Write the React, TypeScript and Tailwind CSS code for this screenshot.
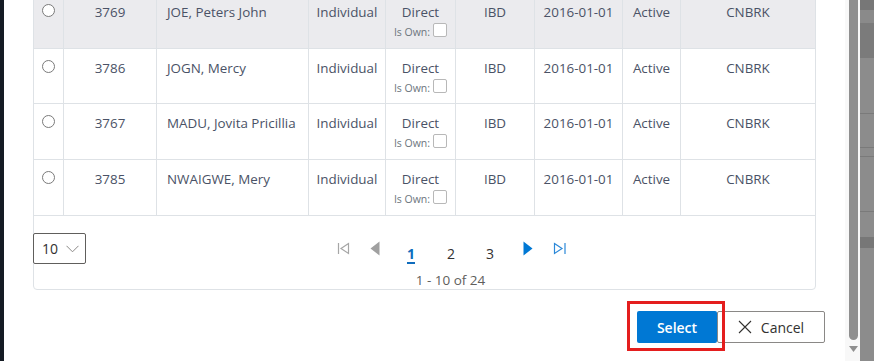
import React from "react";

type Row = { id: string; name: string; h: string; shade?: boolean };

const rows: Row[] = [
  { id: "3769", name: "JOE, Peters John", h: "h-[56px]", shade: true },
  { id: "3786", name: "JOGN, Mercy", h: "h-[55px]" },
  { id: "3767", name: "MADU, Jovita Pricillia", h: "h-[56px]" },
  { id: "3785", name: "NWAIGWE, Mery", h: "h-[56px]" },
];

const cell = "border-r border-[#dee2e6] pt-[9px] leading-[20px]";

const TableRow = ({ r }: { r: Row }) => (
  <div
    className={`grid grid-cols-[30px_93px_152px_77px_70px_79px_88px_58px_134px] border-b border-[#dee2e6] ${r.h} ${
      r.shade ? "bg-[#ebebee]" : "bg-white"
    }`}
  >
    <div className={`${cell} flex justify-center pt-[11px]`}>
      <span className="w-[13px] h-[13px] rounded-full border border-[#7a7a7a] bg-white" />
    </div>
    <div className={`${cell} text-center`}>{r.id}</div>
    <div className={`${cell} pl-[10px]`}>{r.name}</div>
    <div className={`${cell} text-center`}>Individual</div>
    <div className={`${cell} flex flex-col items-center`}>
      <span>Direct</span>
      <span className="flex items-center gap-[3px] text-[10.5px] leading-[14px] text-[#6c757d] mt-[3px]">
        Is Own:
        <span className="w-[14px] h-[14px] rounded-[2px] border border-[#b8b8b8] bg-white -mt-[4px]" />
      </span>
    </div>
    <div className={`${cell} text-center`}>IBD</div>
    <div className={`${cell} text-center`}>2016-01-01</div>
    <div className={`${cell} text-center`}>Active</div>
    <div className="pt-[9px] leading-[20px] text-center">CNBRK</div>
  </div>
);

const Pager = () => (
  <div className="flex flex-col items-center">
    <div className="flex items-center h-[31px] text-[14px]">
      <span className="w-[32px] flex justify-center">
        <svg width="13" height="13" viewBox="0 0 13 13" fill="none" stroke="#a6a6a6" strokeWidth="1.2">
          <path d="M1.5 1v11" />
          <path d="M11.5 1.5 L4 6.5 L11.5 11.5 Z" />
        </svg>
      </span>
      <span className="w-[32px] flex justify-center">
        <svg width="10" height="15" viewBox="0 0 10 15">
          <path d="M9.5 0.5 L0.5 7.5 L9.5 14.5 Z" fill="#a0a0a0" />
        </svg>
      </span>
      <span className="w-[40px] text-center pt-[9px] font-bold text-[#0f6cbd] underline underline-offset-[3px] decoration-[2px]">1</span>
      <span className="w-[40px] text-center pt-[9px] text-[#323130]">2</span>
      <span className="w-[38px] text-center pt-[9px] text-[#323130]">3</span>
      <span className="w-[37px] flex justify-center">
        <svg width="10" height="15" viewBox="0 0 10 15">
          <path d="M0.5 0.5 L9.5 7.5 L0.5 14.5 Z" fill="#0078d4" />
        </svg>
      </span>
      <span className="w-[28px] flex justify-center">
        <svg width="14" height="13" viewBox="0 0 14 13" fill="none" stroke="#2b88d8" strokeWidth="1.2">
          <path d="M1.5 1.5 L9 6.5 L1.5 11.5 Z" />
          <path d="M12 1v11" />
        </svg>
      </span>
    </div>
    <div className="mt-[7px] text-[13.5px] leading-[18px] text-[#605e5c]">1 - 10 of 24</div>
  </div>
);

export default function App() {
  return (
    <div
      className="w-[874px] h-[361px] flex overflow-hidden bg-white text-[14px]"
      style={{ fontFamily: '"Segoe UI", "Open Sans", "Noto Sans", sans-serif' }}
    >
      <div className="w-[4px] bg-[#151b24]" />

      {/* modal body */}
      <div className="w-[841px] bg-white pl-[29px] pr-[20px]">
        <div className="w-[783px] -mt-[8px] border border-[#dee2e6] rounded-[4px] text-[#4a5266] text-[13.4px]">
          {rows.map((r) => (
            <TableRow key={r.id} r={r} />
          ))}
          <div className="flex items-start h-[73px] pt-[17px]">
            <div className="-ml-px w-[53px] h-[31px] border border-[#605e5c] rounded-[2px] flex items-center pl-[8px] gap-[8px] text-[#323130] text-[14px] bg-white">
              <span>10</span>
              <svg width="13" height="8" viewBox="0 0 13 8" fill="none" stroke="#8a8886" strokeWidth="1">
                <path d="M0.5 0.8 L6.5 6.8 L12.5 0.8" />
              </svg>
            </div>
            <div className="flex-1 flex justify-center">
              <Pager />
            </div>
          </div>
        </div>

        <div className="flex justify-end mt-[21px]">
          <div className="relative">
            <button className="w-[80px] h-[32px] rounded-[2px] bg-[#0078d4] text-white font-semibold">
              Select
            </button>
            <div className="absolute -left-[10px] -top-[10px] w-[98px] h-[50px] border-[3px] border-[#e41e1e] pointer-events-none" />
          </div>
          <button className="w-[108px] h-[32px] rounded-[2px] border border-[#8a8886] bg-white text-[#323130] flex items-center justify-center gap-[9px]">
            <svg width="14" height="14" viewBox="0 0 14 14" stroke="#323130" strokeWidth="1.1">
              <path d="M1 1 L13 13 M13 1 L1 13" />
            </svg>
            <span>Cancel</span>
          </button>
        </div>
      </div>

      {/* scrollbar */}
      <div className="w-[15px] bg-[#f8f8f8] flex flex-col items-center">
        <div className="w-[9px] h-[340px] rounded-b-full bg-[#8f8f8f] ml-px" />
        <svg width="9" height="6" viewBox="0 0 9 6" className="mt-[6px] ml-px">
          <path d="M0 0 H9 L4.5 6 Z" fill="#8f8f8f" />
        </svg>
      </div>

      {/* backdrop */}
      <div className="flex-1 flex flex-col">
        <div className="h-[10px] bg-[#777777]" />
        <div className="h-[13px] bg-[#8a8a8a]" />
        <div className="h-[35px] bg-[#7b7b7b]" />
        <div className="h-[56px] bg-[#8c8c8c] border-b border-[#7a7a7a]" />
        <div className="h-[34px] bg-[#8c8c8c] border-b border-[#7a7a7a]" />
        <div className="h-[9px] bg-[#8c8c8c] border-b border-[#7a7a7a]" />
        <div className="h-[55px] bg-[#8c8c8c] border-b border-[#7a7a7a]" />
        <div className="h-[25px] bg-[#8c8c8c]" />
        <div className="h-[11px] bg-[#777777]" />
        <div className="flex-1 bg-[#8c8c8c]" />
      </div>
    </div>
  );
}
